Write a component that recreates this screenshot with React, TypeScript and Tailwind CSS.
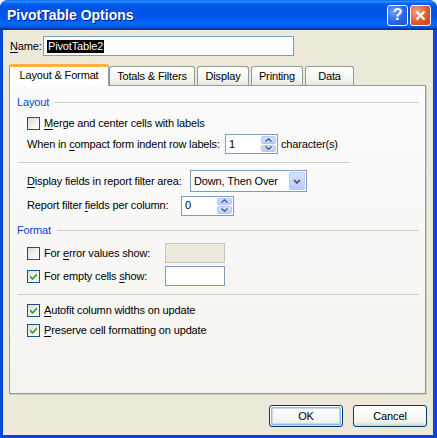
import React from 'react';

const U = ({ children }: { children: React.ReactNode }) => (
    <span className="underline underline-offset-[2px] decoration-[1px]">{children}</span>
);

function CheckBox({ checked }: { checked?: boolean }) {
    return (
        <span className="w-[13px] h-[13px] shrink-0 border border-[#1C5180] bg-[linear-gradient(135deg,#DCDCD7_0%,#F4F4F0_60%,#FFFFFF_100%)] flex items-center justify-center">
            {checked && (
                <svg width="7" height="7" viewBox="0 0 7 7">
                    <path d="M0 2.2 L2.5 4.7 L7 0.2 L7 2.4 L2.5 6.9 L0 4.4 Z" fill="#21A121" />
                </svg>
            )}
        </span>
    );
}

function SpinBox({ value, width }: { value: string; width: string }) {
    return (
        <div className={`${width} h-[20px] shrink-0 border border-[#7F9DB9] bg-white flex items-stretch`}>
            <span className="flex-1 pl-[3px] flex items-center text-black">{value}</span>
            <div className="w-[15px] flex flex-col my-[1px] mr-[1px] gap-px">
                <div className="flex-1 rounded-[2px] border border-[#B4C8F6] bg-[linear-gradient(to_bottom,#D7E2FC,#B9CCF8)] flex items-center justify-center">
                    <svg width="7" height="4" viewBox="0 0 7 4">
                        <path d="M0.5 3.5 L3.5 0.8 L6.5 3.5" stroke="#4D6185" strokeWidth="1.4" fill="none" />
                    </svg>
                </div>
                <div className="flex-1 rounded-[2px] border border-[#B4C8F6] bg-[linear-gradient(to_bottom,#D7E2FC,#B9CCF8)] flex items-center justify-center">
                    <svg width="7" height="4" viewBox="0 0 7 4">
                        <path d="M0.5 0.5 L3.5 3.2 L6.5 0.5" stroke="#4D6185" strokeWidth="1.4" fill="none" />
                    </svg>
                </div>
            </div>
        </div>
    );
}

function GroupHeader({ title }: { title: string }) {
    return (
        <div className="h-[14px] flex items-center pr-[6px]">
            <span className="text-[#0046D5]">{title}</span>
            <div className="flex-1 h-px bg-[#D0D0BF] ml-[6px]" />
        </div>
    );
}

function Tab({ label, width, active }: { label: string; width: string; active?: boolean }) {
    if (active) {
        return (
            <div className={`${width} h-[22px] -mb-px relative z-10 bg-white rounded-t-[3px] border-x border-[#919B9C] border-t-[3px] border-t-[#F3B33D] flex items-center justify-center pb-[2px]`}>
                {label}
            </div>
        );
    }
    return (
        <div className={`${width} h-[19px] rounded-t-[3px] border-x border-t border-[#919B9C] bg-[linear-gradient(to_bottom,#FFFFFF,#F3F3EF_70%,#E8E7E0)] flex items-center justify-center`}>
            {label}
        </div>
    );
}

function XpButton({ label, isDefault }: { label: string; isDefault?: boolean }) {
    return (
        <div className="w-[74px] h-[22px] rounded-[3px] border border-[#003C74] bg-[linear-gradient(to_bottom,#FFFFFF,#F3F3EF_80%,#D6D0C5)] p-px">
            <div
                className={`w-full h-full rounded-[2px] flex items-center justify-center ${
                    isDefault ? 'shadow-[inset_0_0_0_1px_#98B6EE,inset_0_0_0_2px_#C6D7F7]' : ''
                }`}
            >
                {label}
            </div>
        </div>
    );
}

export default function App() {
    return (
        <div className="w-[437px] h-[438px] bg-white text-[11px] leading-none tracking-[-0.15px] whitespace-nowrap text-black font-['Liberation_Sans',Arial,sans-serif]">
            <div className="w-full h-full rounded-t-[8px] bg-[#0A46DC] flex flex-col overflow-hidden">
                {/* Title bar */}
                <div className="h-[30px] shrink-0 bg-[linear-gradient(to_bottom,#0058EE_0%,#3593FF_4%,#288EFF_6%,#127DFF_8%,#036FFC_10%,#0262EE_14%,#0057E5_20%,#0054E3_24%,#0055EB_56%,#005BF5_66%,#026AFE_76%,#0062EF_86%,#0052D6_92%,#0040AB_94%,#003092_100%)] flex items-center justify-between pl-[7px] pr-[6px]">
                    <span className="text-white font-bold text-[14px] tracking-normal [text-shadow:1px_1px_0_#0A1883]">PivotTable Options</span>
                    <div className="flex gap-[2px] items-center">
                        <div className="w-[21px] h-[21px] rounded-[3px] border border-white bg-[radial-gradient(circle_at_30%_30%,#6A9CF8,#2663E2_60%,#1A4FC8)] flex items-center justify-center">
                            <span className="text-white font-bold text-[16px] leading-none">?</span>
                        </div>
                        <div className="w-[21px] h-[21px] rounded-[3px] border border-white bg-[radial-gradient(circle_at_30%_30%,#F2A183,#E0552C_60%,#C8461F)] flex items-center justify-center">
                            <svg width="11" height="11" viewBox="0 0 11 11">
                                <path d="M1.5 1.5 L9.5 9.5 M9.5 1.5 L1.5 9.5" stroke="white" strokeWidth="2.2" />
                            </svg>
                        </div>
                    </div>
                </div>

                {/* Client */}
                <div className="flex-1 ml-[3px] mr-[4px] mb-[3px] bg-[#ECE9D8] flex flex-col">
                    {/* Name row */}
                    <div className="mt-[6px] pl-[7px] h-[20px] flex items-center">
                        <span className="w-[33px]">
                            <U>N</U>ame:
                        </span>
                        <div className="w-[251px] h-[20px] border border-[#7F9DB9] bg-white flex items-center pl-[3px]">
                            <span className="bg-black text-white h-[13px] flex items-center px-px">PivotTable2</span>
                        </div>
                    </div>

                    {/* Tabs */}
                    <div className="mt-[8px] pl-[6px] h-[21px] flex items-end gap-[2px]">
                        <Tab label="Layout & Format" width="w-[100px]" active />
                        <div className="-ml-[2px]">
                            <Tab label="Totals & Filters" width="w-[86px]" />
                        </div>
                        <Tab label="Display" width="w-[52px]" />
                        <Tab label="Printing" width="w-[52px]" />
                        <Tab label="Data" width="w-[49px]" />
                    </div>

                    {/* Panel */}
                    <div className="ml-[6px] w-[417px] h-[309px] border border-[#919B9C] bg-[linear-gradient(to_bottom,#FCFCFE,#F4F3EE)] shadow-[1px_1px_0_#D0CEBF] pl-[7px] pt-[9px] flex flex-col">
                        <GroupHeader title="Layout" />

                        <div className="mt-[7px] h-[14px] ml-[10px] flex items-center gap-[4px]">
                            <CheckBox />
                            <span>
                                <U>M</U>erge and center cells with labels
                            </span>
                        </div>

                        <div className="mt-[4px] h-[20px] ml-[10px] flex items-center">
                            <span className="w-[198px] shrink-0">
                                When in <U>c</U>ompact form indent row labels:
                            </span>
                            <SpinBox value="1" width="w-[53px]" />
                            <span className="ml-[3px]">character(s)</span>
                        </div>

                        <div className="mt-[8px] ml-px w-[332px] h-px bg-[#D0D0BF]" />

                        <div className="mt-[7px] h-[22px] ml-[10px] flex items-center">
                            <span className="w-[163px] shrink-0">
                                <U>D</U>isplay fields in report filter area:
                            </span>
                            <div className="w-[117px] h-[22px] shrink-0 border border-[#7F9DB9] bg-white flex items-stretch">
                                <span className="flex-1 pl-[3px] flex items-center">Down, Then Over</span>
                                <div className="w-[16px] my-[1px] mr-[1px] rounded-[2px] border border-[#B4C8F6] bg-[linear-gradient(to_bottom,#D7E2FC,#B9CCF8)] flex items-center justify-center">
                                    <svg width="8" height="5" viewBox="0 0 8 5">
                                        <path d="M1 1 L4 4 L7 1" stroke="#4D6185" strokeWidth="1.8" fill="none" />
                                    </svg>
                                </div>
                            </div>
                        </div>

                        <div className="mt-[4px] h-[19px] ml-[10px] flex items-center">
                            <span className="w-[154px] shrink-0">
                                Report filter <U>f</U>ields per column:
                            </span>
                            <SpinBox value="0" width="w-[53px]" />
                        </div>

                        <div className="mt-[8px]">
                            <GroupHeader title="Format" />
                        </div>

                        <div className="mt-[6px] h-[20px] ml-[10px] flex items-center">
                            <CheckBox />
                            <span className="ml-[4px] w-[121px] shrink-0">
                                For <U>e</U>rror values show:
                            </span>
                            <div className="w-[60px] h-[20px] border border-[#C9C7BA] bg-[#EBE9DB]" />
                        </div>

                        <div className="mt-[3px] h-[20px] ml-[10px] flex items-center">
                            <CheckBox checked />
                            <span className="ml-[4px] w-[121px] shrink-0">
                                For empty cells <U>s</U>how:
                            </span>
                            <div className="w-[60px] h-[20px] border border-[#7F9DB9] bg-white" />
                        </div>

                        <div className="mt-[8px] ml-px mr-[6px] h-px bg-[#D0D0BF]" />

                        <div className="mt-[8px] h-[14px] ml-[10px] flex items-center gap-[4px]">
                            <CheckBox checked />
                            <span>
                                <U>A</U>utofit column widths on update
                            </span>
                        </div>

                        <div className="mt-[6px] h-[14px] ml-[10px] flex items-center gap-[4px]">
                            <CheckBox checked />
                            <span>
                                <U>P</U>reserve cell formatting on update
                            </span>
                        </div>
                    </div>

                    {/* Buttons */}
                    <div className="mt-[11px] pr-[6px] flex justify-end gap-[10px]">
                        <XpButton label="OK" isDefault />
                        <XpButton label="Cancel" />
                    </div>
                </div>
            </div>
        </div>
    );
}
